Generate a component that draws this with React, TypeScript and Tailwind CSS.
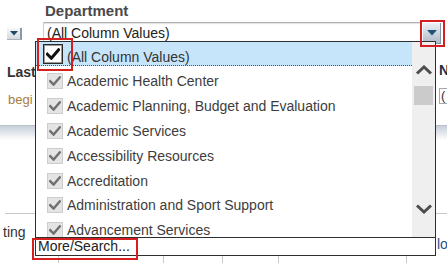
import React from "react";

const items = [
  "Academic Health Center",
  "Academic Planning, Budget and Evaluation",
  "Academic Services",
  "Accessibility Resources",
  "Accreditation",
  "Administration and Sport Support",
  "Advancement Services",
];

function Check({ color, w = 12, h = 10, sw = 2.4 }: { color: string; w?: number; h?: number; sw?: number }) {
  return (
    <svg width={w} height={h} viewBox="0 0 12 10">
      <path d="M1.2 5.2 L4.6 8.6 L10.8 1.4" fill="none" stroke={color} strokeWidth={sw} strokeLinecap="square" />
    </svg>
  );
}

export default function App() {
  return (
    <div
      className="relative w-[447px] h-[263px] overflow-hidden bg-white"
      style={{ fontFamily: '"Liberation Sans", Arial, sans-serif' }}
    >
      {/* top row */}
      <div className="flex h-[46px]">
        <div className="w-[43px]">
          <div className="ml-[7px] mt-[28px] w-[15px] h-[12px] bg-gradient-to-b from-[#f7f8fa] to-[#d3d9df] border-r-2 border-b border-r-[#8d98a3] border-b-[#a9b2bb] flex items-center justify-center">
            <svg width="8" height="5" viewBox="0 0 8 5">
              <path d="M0 0 L8 0 L4 4.5 Z" fill="#1b4a6b" />
            </svg>
          </div>
        </div>
        <div className="flex-1 flex flex-col">
          <div className="h-[22px] pt-[2px] pl-[2px] text-[15px] leading-[18px] font-bold text-[#4a4a4a]">
            Department
          </div>
          <div className="h-[19px] border-t border-l border-t-[#b0b0b0] border-l-[#d0d0d0] shadow-[inset_0_1px_1px_#e2e2e2] pl-[3px] pt-[2px] text-[14px] leading-[16px] text-[#222]">
            (All Column Values)
          </div>
        </div>
        <div className="w-[27px]">
          <div className="ml-[3px] mt-[23px] w-[18px] h-[21px] bg-gradient-to-b from-[#eef2f6] to-[#aebbc7] border-r border-b border-[#8797a5] flex items-center justify-center">
            <svg width="10" height="6" viewBox="0 0 10 6">
              <path d="M0 0 L10 0 L5 5.5 Z" fill="#1f5478" />
            </svg>
          </div>
        </div>
      </div>

      {/* body */}
      <div className="flex h-[210px]">
        <div className="w-[36px] flex flex-col">
          <div className="mt-[18px] pl-[7px] text-[14px] leading-[16px] font-bold text-[#333]">Last</div>
          <div className="mt-[12px] pl-[8px] text-[13px] leading-[16px] text-[#a87d3e]">begi</div>
          <div className="mt-[17px] h-[15px] bg-gradient-to-b from-[#c7cfd9] to-white border-t border-[#b9c2cc]"></div>
          <div className="mt-[73px] ml-[5px] h-px bg-[#c8c8c8]"></div>
          <div className="mt-[10px] pl-[3px] text-[14px] leading-[16px] text-[#333]">ting</div>
        </div>
        <div className="flex-1"></div>
        <div className="w-[11px] flex flex-col overflow-hidden">
          <div className="mt-[16px] pl-[3px] text-[14px] leading-[16px] font-bold text-[#1d2d48]">N</div>
          <div className="mt-[10px] ml-[3px] h-[16px] border-t border-l border-b border-[#a8a8a8] pl-[1px] text-[13px] leading-[14px] text-[#333]">
            (
          </div>
          <div className="mt-[21px] h-[15px] bg-gradient-to-b from-[#c7cfd9] to-white border-t border-[#b9c2cc]"></div>
          <div className="mt-[73px] h-px bg-[#c8c8c8]"></div>
          <div className="mt-[22px] pl-[1px] text-[14px] leading-[16px] text-[#2a4f8a]">lo</div>
        </div>
      </div>

      {/* bottom table row */}
      <div className="flex h-[7px]">
        <div className="w-[58px]"></div>
        <div className="w-[105px] border-l border-[#c8c8c8]"></div>
        <div className="w-[59px] border-l border-[#c8c8c8]"></div>
        <div className="w-[56px] border-l border-[#c8c8c8]"></div>
        <div className="w-[128px] border-l border-[#c8c8c8]"></div>
        <div className="flex-1 border-l border-[#c8c8c8]"></div>
      </div>

      {/* popup */}
      <div className="absolute left-[35px] top-[41px] w-[401px] h-[215px] border border-[#2e2e2e] bg-white flex flex-col">
        <div className="flex h-[195px]">
          <div className="flex-1 overflow-hidden">
            <div className="h-[24px] bg-[#c6e5fb] border-b border-dotted border-[#555] flex items-start">
              <div className="ml-[7px] mt-[2px] w-[20px] h-[20px] border border-[#2a2a2a] bg-white shadow-[inset_0_0_0_1px_#9a9a9a] flex items-center justify-center">
                <Check color="#111" w={14} h={12} sw={2.6} />
              </div>
              <div className="ml-[4px] pt-[7px] text-[14px] leading-[16px] text-[#333]">(All Column Values)</div>
            </div>
            <div className="mt-[3px]">
              {items.map((t) => (
                <div key={t} className="h-[24.8px] flex items-center">
                  <div className="ml-[11px] w-[16px] h-[16px] bg-[#e4e4e4] border border-[#cdcdcd] flex items-center justify-center">
                    <Check color="#707070" />
                  </div>
                  <div className="ml-[4px] text-[14px] leading-[16px] text-[#3d3d3d] whitespace-nowrap">{t}</div>
                </div>
              ))}
            </div>
          </div>
          <div className="w-[23px] bg-[#efefef] flex flex-col">
            <div className="pt-[23px] flex justify-center">
              <svg width="18" height="10" viewBox="0 0 18 10">
                <path d="M2 8.5 L9 2 L16 8.5" fill="none" stroke="#4d4d4d" strokeWidth="3" />
              </svg>
            </div>
            <div className="mt-[11px] mx-[2px] h-[19px] bg-[#cbcbcb]"></div>
            <div className="flex-1"></div>
            <div className="pb-[23px] flex justify-center">
              <svg width="18" height="10" viewBox="0 0 18 10">
                <path d="M2 1.5 L9 8 L16 1.5" fill="none" stroke="#4d4d4d" strokeWidth="3" />
              </svg>
            </div>
          </div>
        </div>
        <div className="h-[18px] border-t border-[#2e2e2e] pl-[2px] text-[14px] leading-[17px] text-[#222]">
          More/Search...
        </div>
      </div>

      {/* annotation boxes */}
      <div className="absolute left-[37px] top-[38px] w-[36px] h-[33px] border-2 border-[#d42020]"></div>
      <div className="absolute left-[420px] top-[20px] w-[25px] h-[27px] border-2 border-[#d42020]"></div>
      <div className="absolute left-[32px] top-[238px] w-[106px] h-[22px] border-2 border-[#d42020]"></div>
    </div>
  );
}
